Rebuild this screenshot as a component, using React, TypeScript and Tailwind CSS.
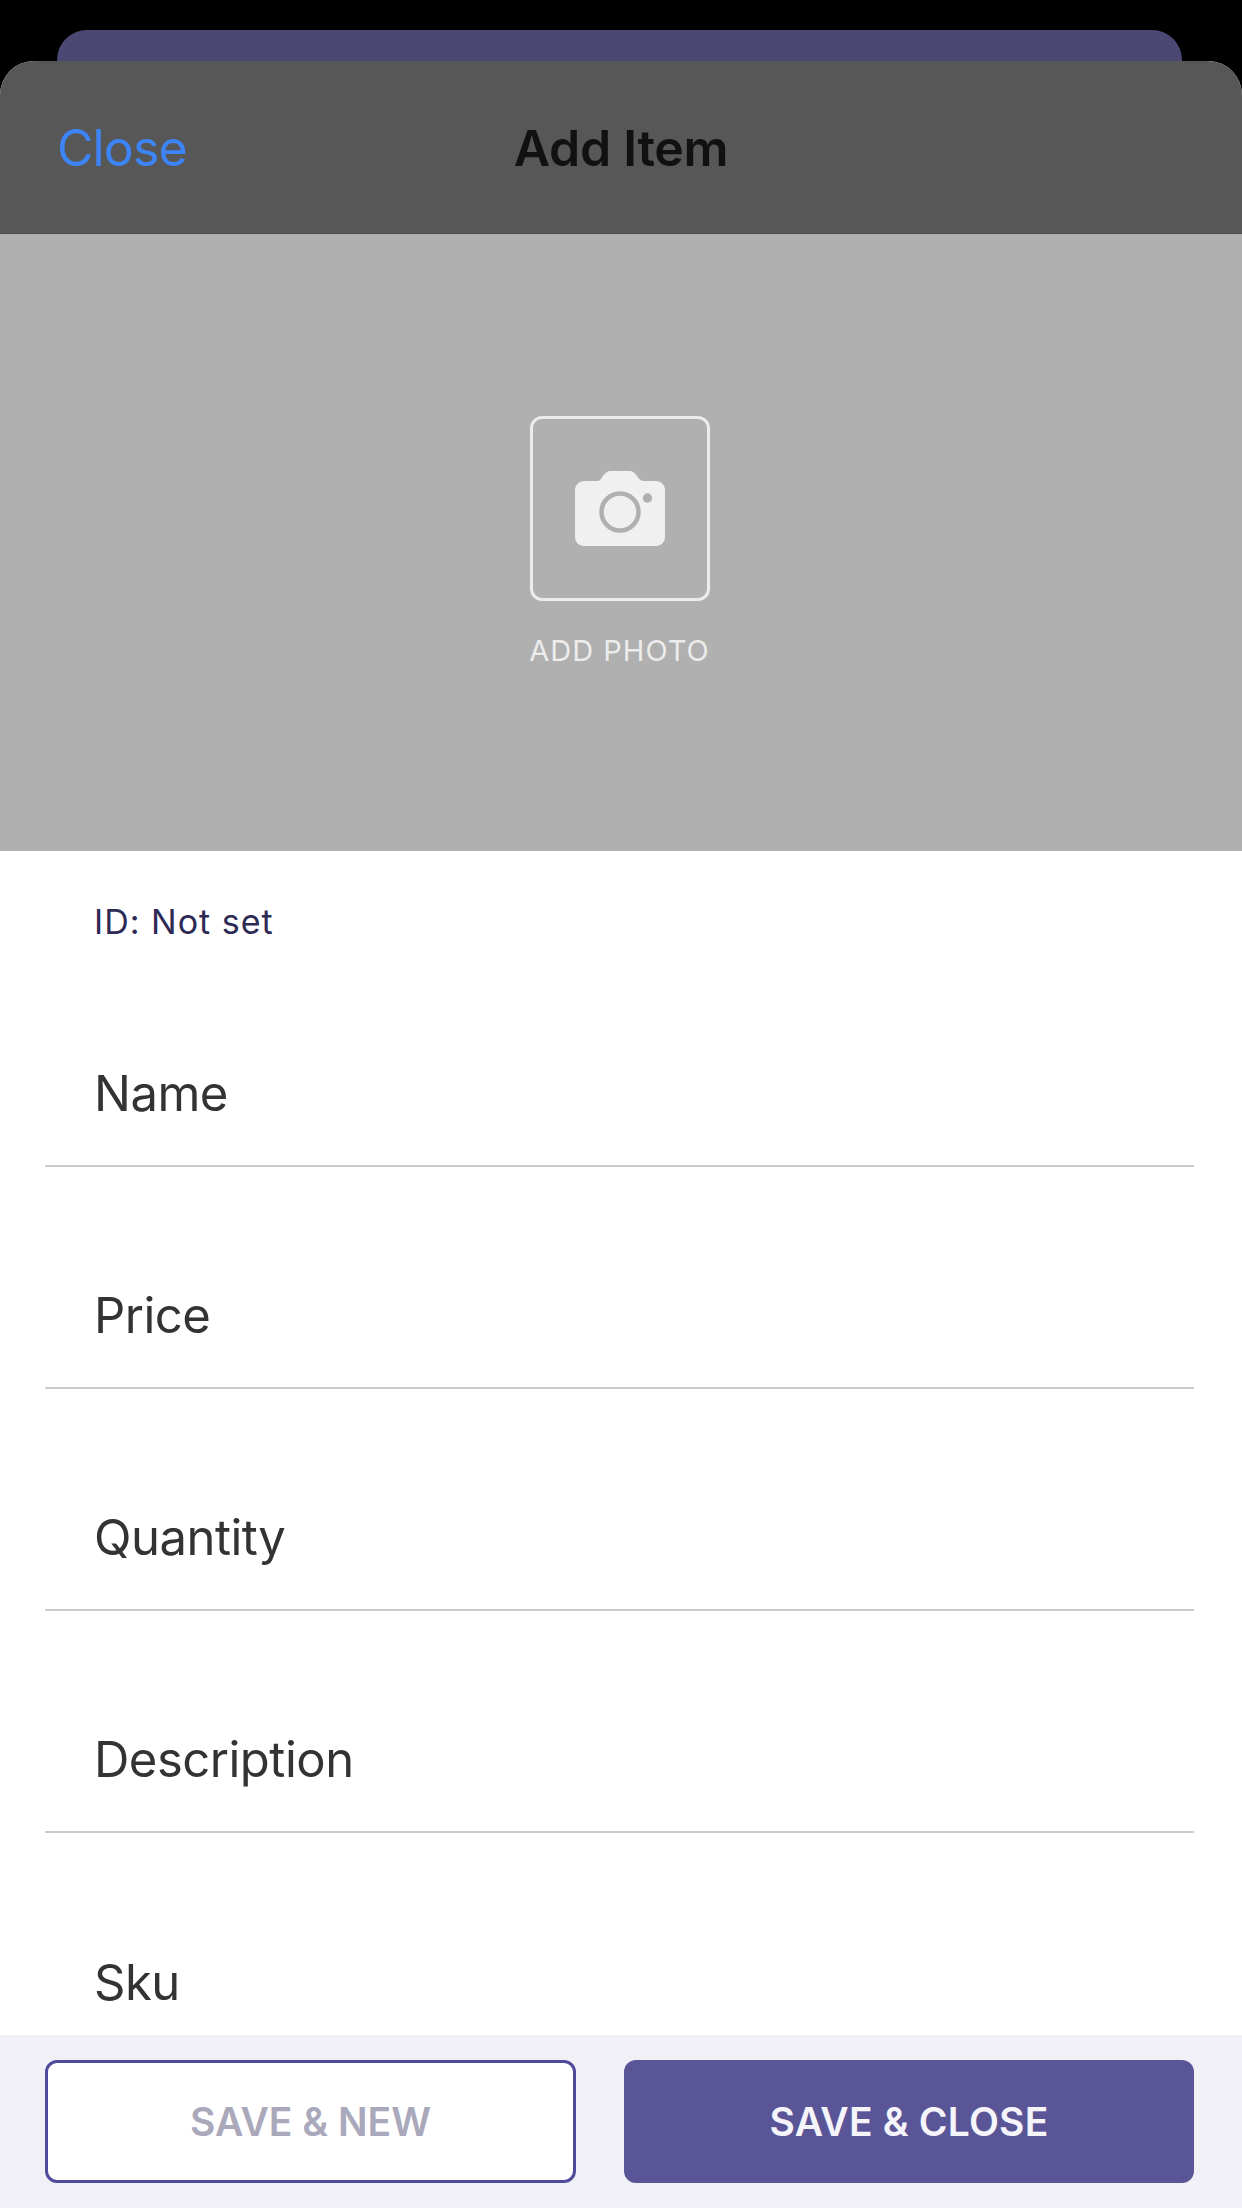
function CameraIcon() {
  return (
    <svg width="90" height="75" viewBox="0 0 90 75">
      <path
        d="M10 10H22C25 10 26 8 28 5C30 2 32 0 36 0H54C58 0 60 2 62 5C64 8 66 10 69 10H81C86 10 90 14 90 19V66C90 71 86 75 81 75H9C4 75 0 71 0 66V19C0 14 4 10 10 10Z"
        fill="#f0f0f0"
      />
      <circle cx="45" cy="41" r="18.5" fill="none" stroke="#b0b0b0" strokeWidth="4.5" />
      <circle cx="72.5" cy="27" r="4.7" fill="#b0b0b0" />
    </svg>
  );
}

const fields = ["Name", "Price", "Quantity", "Description"];

export default function App() {
  return (
    <div className="w-[1242px] h-[2208px] bg-black overflow-hidden flex flex-col pt-[30px] font-['Inter',sans-serif]">
      <div className="ml-[57px] mr-[60px] h-[31px] flex-none rounded-t-[30px] bg-[#4c4874]" />

      <div className="flex-1 min-h-0 flex flex-col rounded-t-[34px] overflow-hidden bg-white">
        {/* Header */}
        <div className="h-[173px] flex-none relative flex items-center justify-center bg-[#575757] border-b border-[#4a4a4a] pt-[3px]">
          <span className="absolute left-[57px] text-[50px] tracking-[-0.9px] text-[#3d84f7]">Close</span>
          <span className="text-[50px] font-semibold tracking-[-0.3px] text-[#111111]">Add Item</span>
        </div>

        {/* Photo */}
        <div className="h-[617px] flex-none flex flex-col items-center justify-center bg-[#b0b0b0] pr-[3px]">
          <div className="w-[180px] h-[185px] flex items-center justify-center rounded-[12px] border-[3px] border-[#ececec]">
            <CameraIcon />
          </div>
          <span className="mt-[32px] text-[29px] leading-[36px] tracking-[1px] text-[#ececec]">ADD PHOTO</span>
        </div>

        {/* Form */}
        <div className="flex-1 min-h-0 overflow-hidden pl-[45px] pr-[48px]">
          <div className="h-[94px] pt-[51px] pl-[49px] text-[34px] leading-[40px] tracking-[1px] text-[#2d2b55]">ID: Not set</div>
          {fields.map((field) => (
            <div key={field} className="h-[222px] flex items-end border-b-2 border-[#cbcbcf] pb-[42px] pl-[49px]">
              <span className="text-[49px] leading-[58px] tracking-[-0.5px] text-[#333333]">{field}</span>
            </div>
          ))}
          <div className="h-[222px] flex items-end pb-[43px] pl-[49px]">
            <span className="text-[49px] leading-[58px] tracking-[-0.5px] text-[#333333]">Sku</span>
          </div>
        </div>

        {/* Footer */}
        <div className="h-[173px] flex-none flex gap-[48px] pl-[45px] pr-[48px] pt-[25px] pb-[25px] bg-[#f0f0f6]">
          <button className="w-[531px] flex items-center justify-center rounded-[12px] border-[3px] border-[#4f4a9b] bg-white pt-[2px] text-[39px] font-semibold text-[#a9a9bb]">
            SAVE &amp; NEW
          </button>
          <button className="flex-1 flex items-center justify-center rounded-[12px] bg-[#5a5597] pt-[2px] text-[39px] font-semibold tracking-[0.2px] text-[#f4f4fa]">
            SAVE &amp; CLOSE
          </button>
        </div>
      </div>
    </div>
  );
}
